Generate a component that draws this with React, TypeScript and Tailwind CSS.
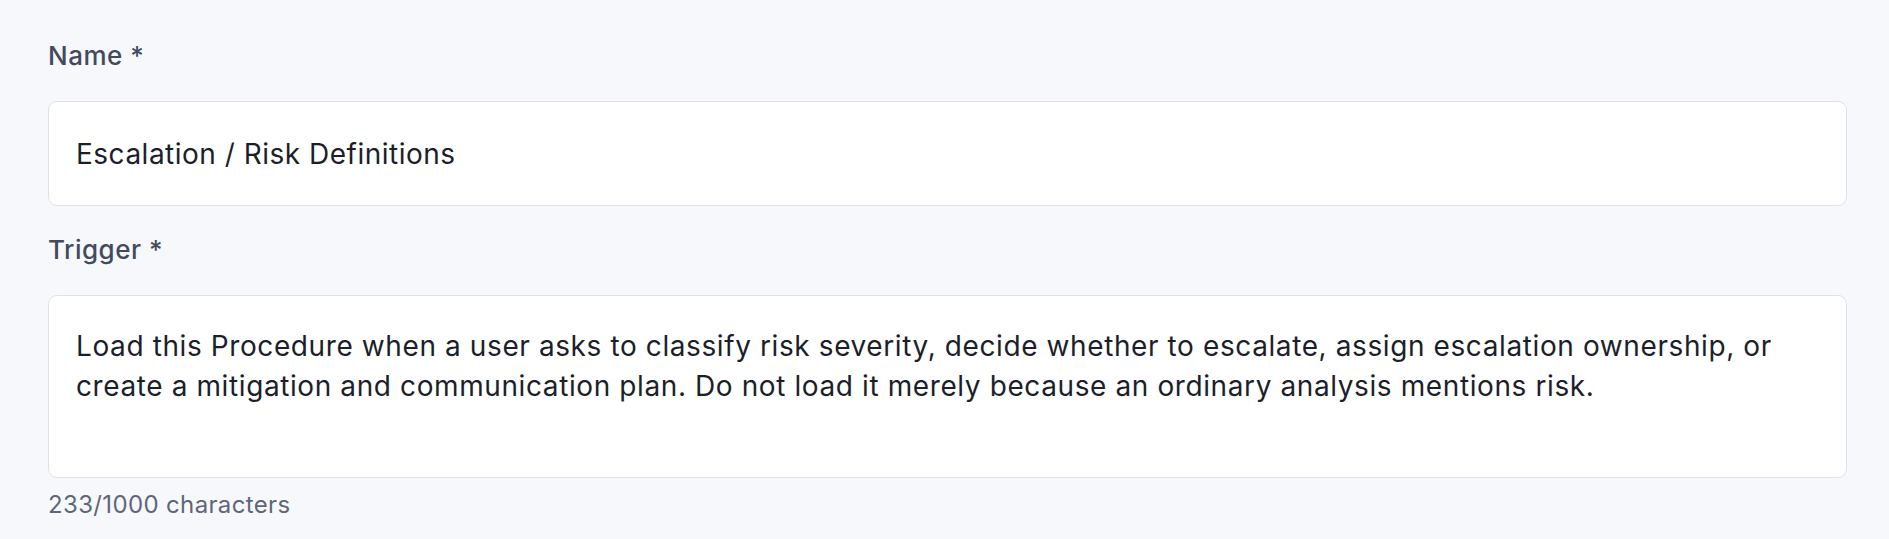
import React from 'react';

const TRIGGER =
  'Load this Procedure when a user asks to classify risk severity, decide whether to escalate, assign escalation ownership, or create a mitigation and communication plan. Do not load it merely because an ordinary analysis mentions risk.';

export default function App() {
  return (
    <div className="min-h-[539px] w-full bg-[#f7f8fc] pl-[48px] pr-[42px] pt-[38px] font-['Inter',sans-serif]">
      <label className="block text-[26px] leading-[36px] font-medium tracking-[0.5px] text-[#424a5e]">Name *</label>
      <div className="mt-[27px] flex h-[105px] items-center rounded-[9px] border border-[#dfe1ea] bg-white px-[27px] pt-[1px]">
        <span className="text-[28px] leading-[40px] tracking-[0.5px] text-[#1c1f2b]">Escalation / Risk Definitions</span>
      </div>

      <label className="mt-[26px] block text-[26px] leading-[36px] font-medium tracking-[0.5px] text-[#424a5e]">Trigger *</label>
      <div className="mt-[27px] h-[183px] rounded-[9px] border border-[#dfe1ea] bg-white px-[27px] pt-[30px]">
        <p className="text-[28px] leading-[40px] tracking-[0.6px] text-[#1c1f2b]">{TRIGGER}</p>
      </div>
      <p className="mt-[11px] text-[24px] leading-[32px] tracking-[0.35px] text-[#5f6679]">{TRIGGER.length}/1000 characters</p>
    </div>
  );
}
